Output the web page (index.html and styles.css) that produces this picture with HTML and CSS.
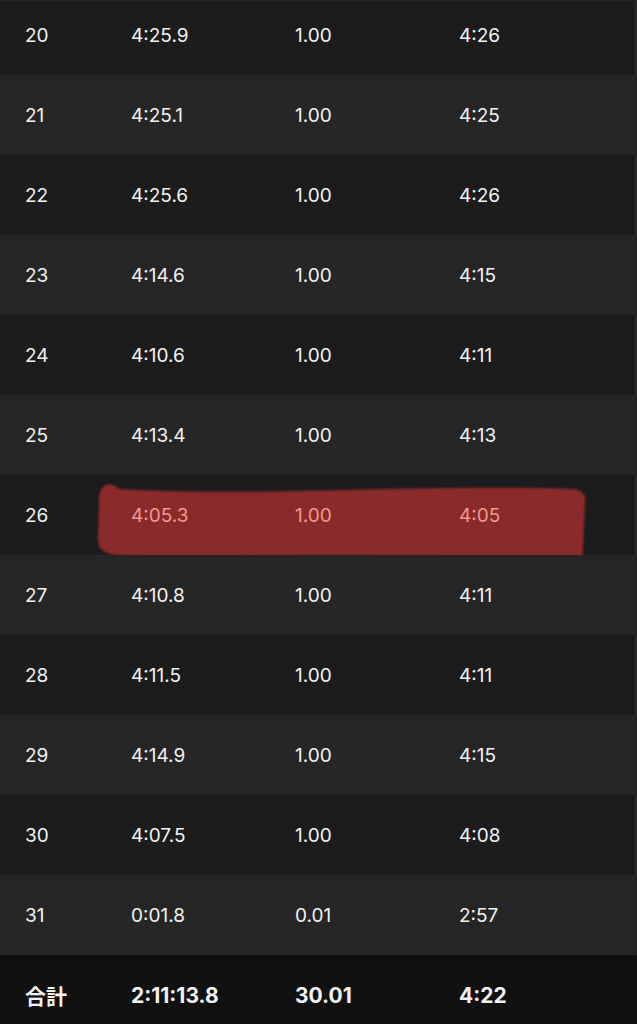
FILE: index.html
```html
<!DOCTYPE html>
<html lang="ja">
<head>
<meta charset="utf-8">
<title>ラップ</title>
<link rel="stylesheet" href="styles.css">
</head>
<body>
<div class="laps">
  <div class="lap first"><span>20</span><span>4:25.9</span><span>1.00</span><span>4:26</span></div>
  <div class="lap"><span>21</span><span>4:25.1</span><span>1.00</span><span>4:25</span></div>
  <div class="lap"><span>22</span><span>4:25.6</span><span>1.00</span><span>4:26</span></div>
  <div class="lap"><span>23</span><span>4:14.6</span><span>1.00</span><span>4:15</span></div>
  <div class="lap"><span>24</span><span>4:10.6</span><span>1.00</span><span>4:11</span></div>
  <div class="lap"><span>25</span><span>4:13.4</span><span>1.00</span><span>4:13</span></div>
  <div class="lap marked">
    <svg class="marker" width="500" height="90" viewBox="0 0 500 90">
      <defs>
        <filter id="soft" x="-5%" y="-10%" width="110%" height="120%">
          <feGaussianBlur stdDeviation="1.2"/>
        </filter>
      </defs>
      <path filter="url(#soft)" fill="#8a2a29"
        d="M8,4 C12,0 18,0 24,6 C60,8 120,10 200,8 C300,6 400,3 478,6 C490,7 491,14 490,22 L488,66 C488,74 484,79 478,79 C400,75 300,72 200,73 C120,74 60,77 20,72 C6,70 2,64 3,52 L4,20 C4,12 5,7 8,4 Z"/>
    </svg>
    <span>26</span><span>4:05.3</span><span>1.00</span><span>4:05</span>
  </div>
  <div class="lap"><span>27</span><span>4:10.8</span><span>1.00</span><span>4:11</span></div>
  <div class="lap"><span>28</span><span>4:11.5</span><span>1.00</span><span>4:11</span></div>
  <div class="lap"><span>29</span><span>4:14.9</span><span>1.00</span><span>4:15</span></div>
  <div class="lap"><span>30</span><span>4:07.5</span><span>1.00</span><span>4:08</span></div>
  <div class="lap"><span>31</span><span>0:01.8</span><span>0.01</span><span>2:57</span></div>
  <div class="lap total"><span>合計</span><span>2:11:13.8</span><span>30.01</span><span>4:22</span></div>
</div>
</body>
</html>
```

FILE: styles.css
```css
body {
  margin: 0;
  background: #1c1c1c;
  font-family: Inter, "Noto Sans CJK JP", sans-serif;
  color: #f2f2f2;
  overflow: hidden;
}
.laps {
  margin-top: -5px;
}
.lap {
  position: relative;
  display: grid;
  grid-template-columns: 106px 164px 164px 1fr;
  align-items: center;
  height: 80px;
  padding-left: 25px;
  font-size: 19px;
  background: #1c1c1c;
  border-right: 2px solid #2a2a2a;
}
.lap:nth-child(even) {
  background: #262626;
  border-right-color: #222;
}
.lap.first {
  box-shadow: inset 0 6px 0 #262626;
}
.lap span {
  position: relative;
}
.marker {
  position: absolute;
  left: 95px;
  top: 8px;
}
.marked span + span {
  color: #f19a91;
}
.lap.total {
  background: #111;
  font-size: 21px;
  font-weight: 700;
  border-right: none;
}
```
